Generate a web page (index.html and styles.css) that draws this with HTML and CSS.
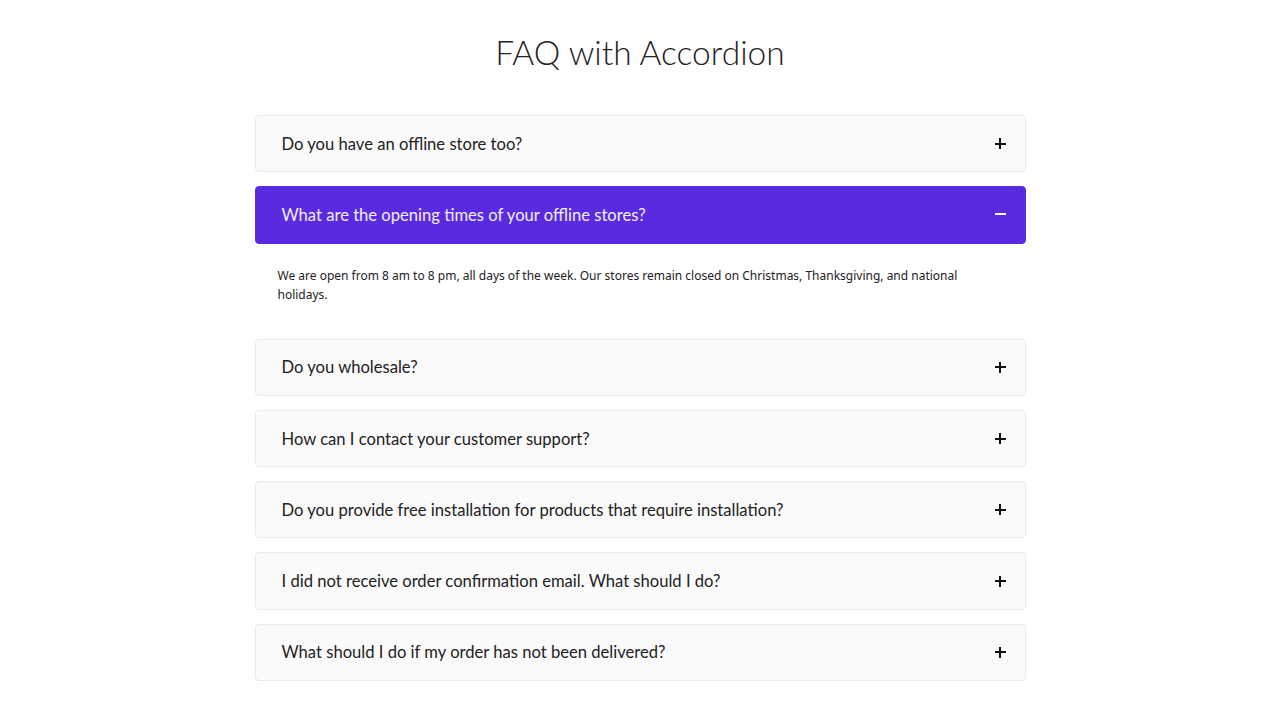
FILE: index.html
```html
<!DOCTYPE html>
<html lang="en">
<head>
<meta charset="utf-8">
<title>FAQ with Accordion</title>
<link rel="stylesheet" href="styles.css">
</head>
<body>
<main class="faq">
  <h1 class="faq-title">FAQ with Accordion</h1>
  <div class="accordion">
    <div class="item">
      <div class="question"><span>Do you have an offline store too?</span><span class="icon plus"></span></div>
    </div>
    <div class="item open">
      <div class="question"><span>What are the opening times of your offline stores?</span><span class="icon minus"></span></div>
      <div class="answer">We are open from 8 am to 8 pm, all days of the week. Our stores remain closed on Christmas, Thanksgiving, and national holidays.</div>
    </div>
    <div class="item">
      <div class="question"><span>Do you wholesale?</span><span class="icon plus"></span></div>
    </div>
    <div class="item">
      <div class="question"><span>How can I contact your customer support?</span><span class="icon plus"></span></div>
    </div>
    <div class="item">
      <div class="question"><span>Do you provide free installation for products that require installation?</span><span class="icon plus"></span></div>
    </div>
    <div class="item">
      <div class="question"><span>I did not receive order confirmation email. What should I do?</span><span class="icon plus"></span></div>
    </div>
    <div class="item">
      <div class="question"><span>What should I do if my order has not been delivered?</span><span class="icon plus"></span></div>
    </div>
  </div>
</main>
</body>
</html>
```
FILE: styles.css
```css
* { box-sizing: border-box; }
body {
  margin: 0;
  background: #fff;
  color: #222;
  font-family: "Lato", "Open Sans", sans-serif;
}
.faq {
  width: 771px;
  margin: 0 auto;
  padding-top: 30px;
}
.faq-title {
  margin: 0 0 41px;
  text-align: center;
  font-weight: 300;
  font-size: 33.5px;
  line-height: 44px;
  color: #222;
}
.accordion {
  display: flex;
  flex-direction: column;
  gap: 14px;
}
.question {
  height: 57.3px;
  display: flex;
  align-items: center;
  justify-content: space-between;
  padding: 0 19px 0 26px;
  background: #fafafa;
  border: 1px solid #ebebeb;
  border-radius: 4px;
  font-size: 16.6px;
  color: #222;
}
.open .question {
  background: #5a2ae0;
  border-color: #5a2ae0;
  color: #f2eefc;
}
.icon {
  position: relative;
  width: 11px;
  height: 11px;
}
.icon::before, .icon::after {
  content: "";
  position: absolute;
  background: #111;
}
.icon::before { left: 0; right: 0; top: 4.5px; height: 2px; }
.plus::after { top: 0; bottom: 0; left: 4.5px; width: 2px; }
.minus::after { display: none; }
.minus::before { background: #fff; top: 4px; height: 2px; }
.answer {
  padding: 22px 20px 21px 23px;
  font-family: "Noto Sans", "Open Sans", sans-serif;
  font-size: 12px;
  line-height: 19px;
  color: #222;
}
```
